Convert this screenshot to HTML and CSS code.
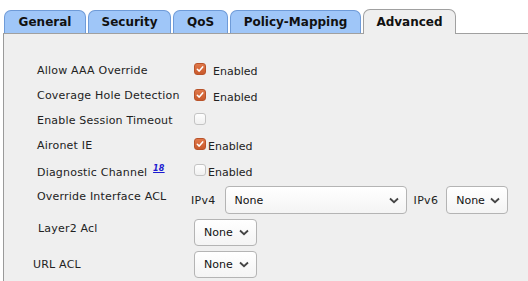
FILE: index.html
```html
<!DOCTYPE html>
<html lang="en">
<head>
    <meta charset="UTF-8">
    <title>WLAN Advanced</title>
    <link rel="stylesheet" href="styles.css">
</head>
<body>
    <nav class="tabs">
        <div class="tab tab-general">General</div>
        <div class="tab tab-security">Security</div>
        <div class="tab tab-qos">QoS</div>
        <div class="tab tab-policy">Policy-Mapping</div>
        <div class="tab tab-active">Advanced</div>
    </nav>

    <main class="panel">
        <div class="row row-aaa">
            <span class="label">Allow AAA Override</span>
            <span class="check on"><svg viewBox="0 0 13 13"><path d="M3 6.8 L5.5 9.2 L10 3.8" /></svg></span>
            <span class="enabled">Enabled</span>
        </div>
        <div class="row row-chd">
            <span class="label">Coverage Hole Detection</span>
            <span class="check on"><svg viewBox="0 0 13 13"><path d="M3 6.8 L5.5 9.2 L10 3.8" /></svg></span>
            <span class="enabled">Enabled</span>
        </div>
        <div class="row row-session">
            <span class="label">Enable Session Timeout</span>
            <span class="check"></span>
        </div>
        <div class="row row-aironet">
            <span class="label">Aironet IE</span>
            <span class="check on"><svg viewBox="0 0 13 13"><path d="M3 6.8 L5.5 9.2 L10 3.8" /></svg></span>
            <span class="enabled tight">Enabled</span>
        </div>
        <div class="row row-diag">
            <span class="label">Diagnostic Channel <a class="note" href="#">18</a></span>
            <span class="check"></span>
            <span class="enabled tight">Enabled</span>
        </div>
        <div class="row row-sel row-acl">
            <span class="label">Override Interface ACL</span>
            <span class="ip">IPv4</span>
            <div class="select select-wide"><span>None</span><svg class="chev" viewBox="0 0 10 7"><path d="M1 1.5 L5 5.2 L9 1.5" /></svg></div>
            <span class="ip">IPv6</span>
            <div class="select select-v6"><span>None</span><svg class="chev" viewBox="0 0 10 7"><path d="M1 1.5 L5 5.2 L9 1.5" /></svg></div>
        </div>
        <div class="row row-sel row-l2">
            <span class="label">Layer2 Acl</span>
            <div class="select"><span>None</span><svg class="chev" viewBox="0 0 10 7"><path d="M1 1.5 L5 5.2 L9 1.5" /></svg></div>
        </div>
        <div class="row row-sel row-url">
            <span class="label">URL ACL</span>
            <div class="select"><span>None</span><svg class="chev" viewBox="0 0 10 7"><path d="M1 1.5 L5 5.2 L9 1.5" /></svg></div>
        </div>
    </main>
</body>
</html>
```

FILE: styles.css
```css
body {
    margin: 0;
    font-family: "DejaVu Sans", Verdana, sans-serif;
    font-size: 11px;
    color: #222;
    background: #fff;
    overflow: hidden;
    height: 281px;
}

.tabs {
    display: flex;
    align-items: flex-end;
    padding: 9px 0 0 4px;
    gap: 2px;
    position: relative;
    z-index: 1;
}

.tab {
    height: 23px;
    box-sizing: border-box;
    padding-top: 4px;
    text-align: center;
    font-weight: bold;
    font-size: 12px;
    color: #111;
    background: #9fc6f8;
    border: 1px solid #6f9bd8;
    border-bottom: none;
    border-radius: 7px 7px 0 0;
}

.tab-general { width: 82px; }
.tab-security { width: 83px; }
.tab-qos { width: 55px; }
.tab-policy { width: 131px; }

.tab-active {
    width: 93px;
    height: 25px;
    margin-bottom: -1px;
    padding-top: 5px;
    background: #efefef;
    border-color: #a0a0a0;
}

.panel {
    margin-left: 3px;
    height: 248px;
    box-sizing: border-box;
    background: #efefef;
    border-left: 1px solid #9a9a9a;
    border-top: 1px solid #a0a0a0;
    padding: 23px 0 0 33px;
}

.row {
    display: flex;
    align-items: center;
}

.label {
    width: 157px;
    flex: none;
    letter-spacing: 0.2px;
}

.row-aaa { height: 26px; }
.row-chd { height: 25px; }
.row-session { height: 24px; }
.row-aironet { height: 26px; }
.row-diag { height: 26px; }

.row-sel {
    align-items: flex-start;
}

.row-sel .label {
    line-height: 13px;
}

.row-acl { margin-top: 2px; }
.row-acl .label { width: 154px; padding-top: 4px; }
.row-l2 { margin-top: 5px; }
.row-l2 .label { width: 156px; padding: 3px 0 0 1px; }
.row-url { margin-top: 5px; }
.row-url .label { width: 161px; margin-left: -4px; padding-top: 7px; }

.check {
    width: 12px;
    height: 12px;
    flex: none;
    box-sizing: border-box;
    border: 1px solid #c4c4c4;
    border-radius: 3px;
    background: linear-gradient(#fefefe, #f0f0f0);
    margin-top: -2px;
}

.check.on {
    border-color: #b9532a;
    background: linear-gradient(#e0784a, #c95a2c);
}

.check svg {
    display: block;
    width: 10px;
    height: 10px;
}

.check path {
    fill: none;
    stroke: #fff;
    stroke-width: 2;
    stroke-linecap: round;
    stroke-linejoin: round;
}

.enabled {
    margin-left: 7px;
    margin-top: 3px;
}

.enabled.tight {
    margin-left: 2px;
}

.note {
    font-size: 8px;
    font-weight: bold;
    font-style: italic;
    color: #1a1ad0;
    vertical-align: 5px;
    margin-left: 2px;
}

.ip {
    align-self: center;
    margin-right: 9px;
    letter-spacing: 0.3px;
}

.select {
    height: 27px;
    width: 63px;
    box-sizing: border-box;
    display: flex;
    align-items: center;
    justify-content: space-between;
    padding: 0 7px 0 9px;
    border: 1px solid #b4b4b4;
    border-radius: 4px;
    background: linear-gradient(#ffffff, #f4f4f4);
    color: #111;
    flex: none;
}

.select-wide {
    width: 182px;
    height: 28px;
    margin-right: 7px;
}

.select-v6 {
    width: 62px;
    height: 28px;
    margin-left: -1px;
}

.chev {
    width: 10px;
    height: 7px;
}

.chev path {
    fill: none;
    stroke: #444;
    stroke-width: 1.8;
}
```
